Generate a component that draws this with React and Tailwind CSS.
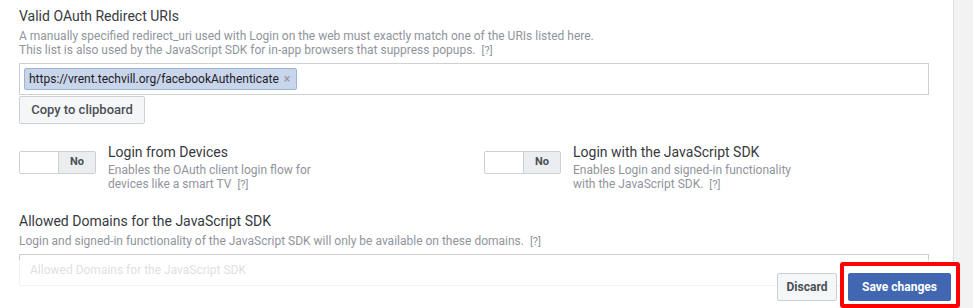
import React from "react";

function Help() {
  return <span className="ml-[6px] text-[11px] text-[#90949c]">[?]</span>;
}

function Toggle() {
  return (
    <div className="mt-[0px] flex h-[23px] w-[77px] shrink-0 overflow-hidden rounded-[2px] border border-[#ccd0d5]">
      <div className="w-[38px] bg-white" />
      <div className="flex flex-1 items-center justify-center border-l border-[#ccd0d5] bg-[#ebedf0] text-[11px] font-bold text-[#4b4f56]">
        No
      </div>
    </div>
  );
}

function ToggleRow({ title, desc1, desc2 }) {
  return (
    <div className="flex items-start">
      <div className="pt-[7px]">
        <Toggle />
      </div>
      <div className="ml-[12px] w-[228px]">
        <div className="text-[14px] leading-[16px] text-[#373a40]">{title}</div>
        <div className="mt-[3px] text-[12px] leading-[14px] text-[#90949c]">
          {desc1}
          <br />
          {desc2}
          <Help />
        </div>
      </div>
    </div>
  );
}

export default function App() {
  return (
    <div className="relative flex h-[308px] w-[973px] overflow-hidden bg-white font-['Roboto',sans-serif]">
      <main className="relative w-[954px] shrink-0 border-r border-[#dddfe2] pl-[19px] pr-[24px] pt-[7px]">
        <div className="text-[14px] leading-[18px] text-[#373a40]">Valid OAuth Redirect URIs</div>
        <div className="mt-[4px] text-[12px] leading-[14px] text-[#90949c]">
          A manually specified redirect_uri used with Login on the web must exactly match one of the URIs listed here.
          <br />
          This list is also used by the JavaScript SDK for in-app browsers that suppress popups.
          <Help />
        </div>
        <div className="mt-[5px] flex h-[32px] items-center border border-[#ccd0d5] bg-white pl-[4px]">
          <div className="flex h-[22px] items-center rounded-[2px] border border-[#9cb4d8] bg-[#c9d5ea] pl-[4px] pr-[6px] text-[12px] text-[#1d2129]">
            https://vrent.techvill.org/facebookAuthenticate
            <span className="ml-[5px] text-[12px] leading-none text-[#8d949e]">×</span>
          </div>
        </div>
        <button className="mt-[1px] flex h-[28px] w-[126px] items-center justify-center rounded-[2px] border border-[#ccd0d5] bg-[#f5f6f7] text-[13px] font-medium text-[#4b4f56]">
          Copy to clipboard
        </button>

        <div className="mt-[20px] flex">
          <div className="w-[465px]">
            <ToggleRow
              title="Login from Devices"
              desc1="Enables the OAuth client login flow for"
              desc2="devices like a smart TV"
            />
          </div>
          <div>
            <ToggleRow
              title="Login with the JavaScript SDK"
              desc1="Enables Login and signed-in functionality"
              desc2="with the JavaScript SDK."
            />
          </div>
        </div>

        <div className="mt-[20px] text-[14px] leading-[18px] text-[#373a40]">Allowed Domains for the JavaScript SDK</div>
        <div className="mt-[4px] text-[12px] leading-[14px] text-[#90949c]">
          Login and signed-in functionality of the JavaScript SDK will only be available on these domains.
          <Help />
        </div>
        <div className="mt-[5px] flex h-[32px] items-center border border-[#ccd0d5] bg-white pl-[10px] text-[12px] text-[#90949c]">
          Allowed Domains for the JavaScript SDK
        </div>

        <div className="absolute bottom-0 left-0 right-0 flex h-[48px] items-end justify-end bg-white/70">
          <button className="mb-[7px] mr-[3px] flex h-[28px] w-[60px] items-center justify-center rounded-[2px] border border-[#ccd0d5] bg-[#f5f6f7] text-[12px] font-bold text-[#4b4f56]">
            Discard
          </button>
          <div className="mr-[-7px] h-[46px] rounded-[3px] border-[4px] border-[#ff0000] bg-white pb-[3px] pl-[4px] pr-[5px] pt-[7px]">
            <button className="flex h-[28px] w-[103px] items-center justify-center rounded-[2px] border border-[#4267b2] bg-[#4267b2] text-[12px] font-bold text-white">
              Save changes
            </button>
          </div>
        </div>
      </main>
      <aside className="flex-1 bg-[#f2f2f2]" />
    </div>
  );
}
